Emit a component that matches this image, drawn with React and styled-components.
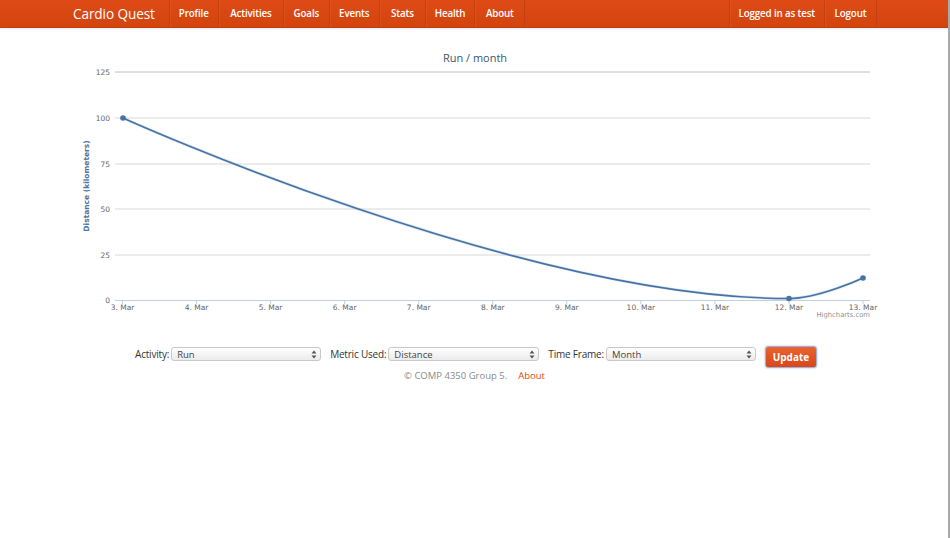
import React from 'react';
import styled, { createGlobalStyle } from 'styled-components';

const Global = createGlobalStyle`
  html, body { margin: 0; padding: 0; background: #fff; }
  body {
    font-family: 'Open Sans', 'Liberation Sans', sans-serif;
    color: #333;
    width: 950px;
    height: 538px;
    overflow: hidden;
    box-sizing: border-box;
    border-right: 2px solid #a9a9a9;
  }
`;

const NavBar = styled.div`
  height: 27px;
  background: linear-gradient(#de4a15, #d3440f);
  border-bottom: 1px solid #c23d0c;
  box-shadow: 0 1px 2px rgba(0, 0, 0, 0.08);
`;

const NavInner = styled.div`
  width: 819px;
  margin: 0 0 0 58px;
  display: flex;
  height: 100%;
  align-items: stretch;
`;

const Brand = styled.a`
  display: flex;
  align-items: center;
  padding: 0 14px 0 15px;
  color: #fff;
  font-size: 13.6px;
  font-weight: 500;
  letter-spacing: -0.1px;
  text-decoration: none;
`;

const NavList = styled.div`
  display: flex;
  border-left: 1px solid #c4400f;
  margin-left: ${p => (p.$right ? 'auto' : '0')};
`;

const NavItem = styled.a`
  display: flex;
  align-items: center;
  padding: 0 ${p => p.$pad || 10}px;
  color: #fff;
  font-size: 9.8px;
  font-weight: 600;
  letter-spacing: -0.15px;
  text-decoration: none;
  border-right: 1px solid #c4400f;
  box-shadow: inset 1px 0 0 rgba(255, 255, 255, 0.06);
`;

const ChartSvg = styled.svg`
  display: block;
  font-family: 'DejaVu Sans', Verdana, sans-serif;
`;

const FormRow = styled.form`
  display: flex;
  align-items: center;
  justify-content: center;
  margin-top: 12px;
  padding-left: 4px;
  font-size: 10px;
  letter-spacing: -0.2px;
  color: #333;
`;

const Field = styled.label`
  display: flex;
  align-items: center;
  margin-right: ${p => p.$gap || 9}px;
`;

const SelectBox = styled.div`
  position: relative;
  width: ${p => p.$w || 150}px;
  height: 14px;
  margin-left: 2px;
  border: 1px solid #c8c8c8;
  border-radius: 3px;
  background: linear-gradient(#ffffff, #ebebeb);
  box-sizing: border-box;
  display: flex;
  align-items: center;
  padding-left: 5px;
  font-size: 9.5px;
  letter-spacing: 0;
  color: #444;
`;

const Arrows = styled.svg`
  position: absolute;
  right: 3px;
  top: 2px;
`;

const UpdateButton = styled.button`
  width: 52px;
  height: 22px;
  margin-top: 6px;
  border: 1px solid #9bb3d6;
  border-radius: 3px;
  background: linear-gradient(#ea6230, #d8471a);
  color: #fff;
  font-family: 'Open Sans', 'Liberation Sans', sans-serif;
  font-size: 10px;
  font-weight: 700;
  box-shadow: 0 0 2px rgba(80, 130, 210, 0.6);
  padding: 0;
`;

const Footer = styled.div`
  display: flex;
  justify-content: center;
  gap: 11px;
  margin-top: 1px;
  padding-left: 1px;
  font-size: 9.5px;
  color: #8a8a8a;
`;

const FooterLink = styled.a`
  color: #dd4814;
  text-decoration: none;
`;

const yTicks = [
  { v: 125, y: 72 },
  { v: 100, y: 118 },
  { v: 75, y: 164 },
  { v: 50, y: 209 },
  { v: 25, y: 255 },
];

const days = [3, 4, 5, 6, 7, 8, 9, 10, 11, 12, 13];
const xOf = i => 122.5 + i * 74.05;

function Chart() {
  return (
    <ChartSvg width="946" height="300" viewBox="0 28 946 300">
      <text x="475" y="62" textAnchor="middle" fontSize="11" fill="#3e576f"
        fontFamily="'Open Sans', sans-serif">Run / month</text>

      {yTicks.map(t => (
        <g key={t.v}>
          <line x1="115" x2="870" y1={t.y} y2={t.y} stroke={t.v === 125 ? '#c0c0c0' : '#d8d8d8'} strokeWidth="1" />
          <text x="110" y={t.y + 3} textAnchor="end" fontSize="7.5" fill="#666">{t.v}</text>
        </g>
      ))}
      <text x="110" y="303" textAnchor="end" fontSize="7.5" fill="#666">0</text>

      <text transform="translate(89 186) rotate(-90)" textAnchor="middle" fontSize="7.5"
        fontWeight="bold" fill="#4d759e">Distance (kilometers)</text>

      <line x1="115" x2="870" y1="300.5" y2="300.5" stroke="#c0d0e0" strokeWidth="1" />
      {days.map((d, i) => (
        <g key={d}>
          <line x1={xOf(i)} x2={xOf(i)} y1="300" y2="304" stroke="#c0d0e0" />
          <text x={xOf(i)} y="310" textAnchor="middle" fontSize="7.5" fill="#666">{d}. Mar</text>
        </g>
      ))}

      <path d="M123 118 C123 118 522.6 298.5 789 298.5 C818.6 298.5 863 278 863 278"
        fill="none" stroke="#4572a7" strokeWidth="3" strokeOpacity="0.18" />
      <path d="M123 118 C123 118 522.6 298.5 789 298.5 C818.6 298.5 863 278 863 278"
        fill="none" stroke="#4572a7" strokeWidth="1.6" />
      <circle cx="123" cy="118" r="2.8" fill="#4572a7" />
      <circle cx="789" cy="298.5" r="2.8" fill="#4572a7" />
      <circle cx="863" cy="278" r="2.8" fill="#4572a7" />

      <text x="870" y="317" textAnchor="end" fontSize="6.8" fill="#909090">Highcharts.com</text>
    </ChartSvg>
  );
}

function Select({ value, w }) {
  return (
    <SelectBox $w={w}>
      {value}
      <Arrows width="6" height="9" viewBox="0 0 6 9">
        <path d="M3 0.5 L5.5 3.5 H0.5 Z" fill="#555" />
        <path d="M3 8.5 L5.5 5.5 H0.5 Z" fill="#555" />
      </Arrows>
    </SelectBox>
  );
}

export default function App() {
  return (
    <>
      <Global />
      <NavBar>
        <NavInner>
          <Brand href="#">Cardio Quest</Brand>
          <NavList>
            <NavItem href="#" $pad={9}>Profile</NavItem>
            <NavItem href="#" $pad={11.5}>Activities</NavItem>
            <NavItem href="#" $pad={9.5}>Goals</NavItem>
            <NavItem href="#" $pad={9.5}>Events</NavItem>
            <NavItem href="#" $pad={11}>Stats</NavItem>
            <NavItem href="#" $pad={9}>Health</NavItem>
            <NavItem href="#" $pad={10.5}>About</NavItem>
          </NavList>
          <NavList $right>
            <NavItem href="#" $pad={9}>Logged in as test</NavItem>
            <NavItem href="#" $pad={9.5}>Logout</NavItem>
          </NavList>
        </NavInner>
      </NavBar>

      <Chart />

      <FormRow onSubmit={e => e.preventDefault()}>
        <Field>Activity: <Select value="Run" w={150} /></Field>
        <Field>Metric Used: <Select value="Distance" w={151} /></Field>
        <Field $gap={9}>Time Frame: <Select value="Month" w={150} /></Field>
        <UpdateButton type="submit">Update</UpdateButton>
      </FormRow>
      <Footer>
        <span>© COMP 4350 Group 5.</span>
        <FooterLink href="#">About</FooterLink>
      </Footer>
    </>
  );
}
